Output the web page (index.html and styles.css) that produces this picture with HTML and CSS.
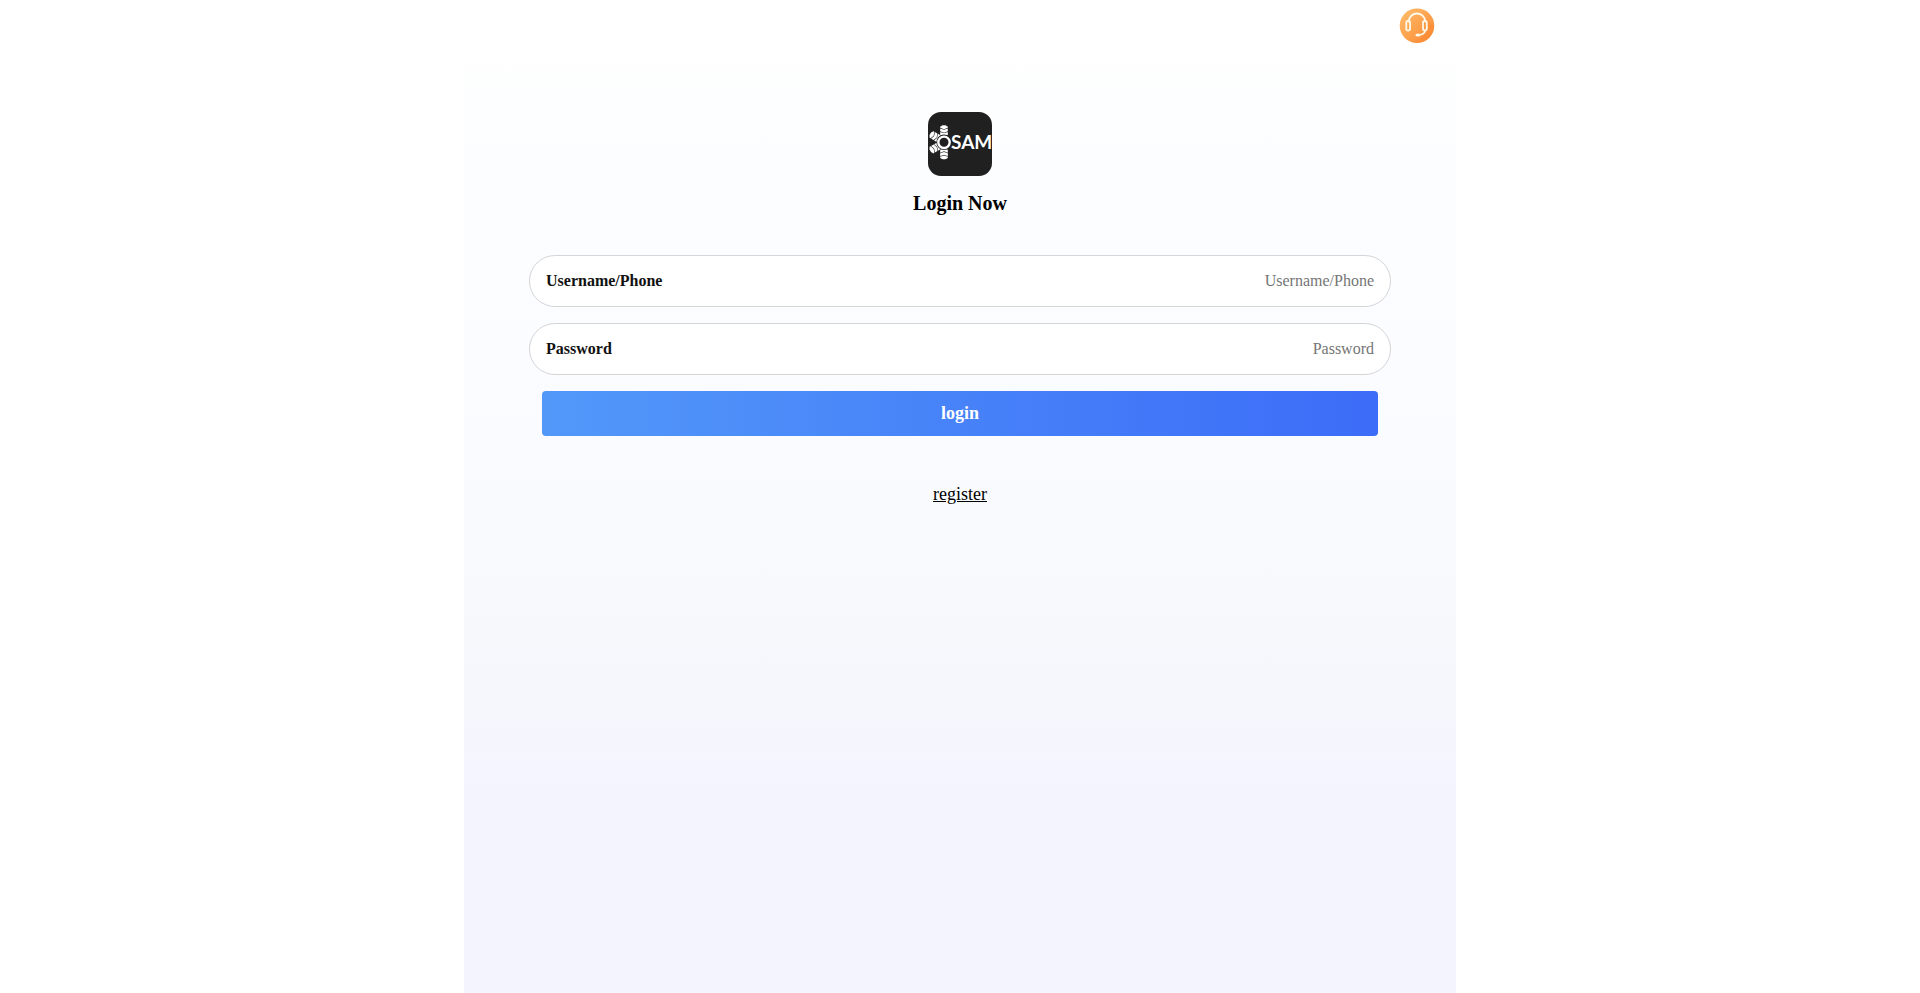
FILE: index.html
```html
<!DOCTYPE html>
<html lang="en">
<head>
<meta charset="utf-8">
<meta name="viewport" content="width=device-width, initial-scale=1">
<title>Login Now</title>
<link rel="stylesheet" href="styles.css">
</head>
<body>
<div class="page">
  <header class="topbar">
    <button class="support" type="button" aria-label="Customer service">
      <svg viewBox="0 0 36 36" width="36" height="36" aria-hidden="true">
        <defs>
          <linearGradient id="orange" x1="0" y1="0" x2="1" y2="1">
            <stop offset="0" stop-color="#ffbf6e"/>
            <stop offset="1" stop-color="#fb8730"/>
          </linearGradient>
        </defs>
        <circle cx="18" cy="17.700" r="17.300" fill="url(#orange)"/>
        <path d="M26 9A17.300 17.300 0 0 1 13 34 A17.300 17.300 0 0 0 35 19 Z" fill="#fb8126" opacity=".25"/>
        <g fill="none" stroke="#fff8e8" stroke-width="1.800" stroke-linecap="round">
          <path d="M9.800 13.500C10.500 2.800 25.500 2.800 26.200 13.500"/>
          <rect x="7.300" y="13" width="3.800" height="9.500" rx="1.500"/>
          <rect x="24" y="13" width="3.800" height="9.500" rx="1.500"/>
          <path d="M26 22.500C25.700 25 23.500 26.800 20 27"/>
        </g>
        <ellipse cx="18.800" cy="27" rx="2.500" ry="1.500" fill="#fff8e8"/>
      </svg>
    </button>
  </header>
  <main class="content">
    <svg class="logo" viewBox="0 0 64 64" width="64" height="64" role="img" aria-label="OSAM">
      <defs>
        <g id="spoke">
          <path d="M-3.800-7.400V-10.400L0-9 3.800-10.400V-7.400L0-5.500Z"/>
          <path d="M-3.800-11V-13.900L0-12.500 3.800-13.900V-11L0-9.600Z"/>
          <path d="M-3.800-14.500V-15.600L-1.500-17H1.500L3.800-15.600V-14.500L0-13.100Z"/>
        </g>
      </defs>
      <rect width="64" height="64" rx="13" fill="#202020"/>
      <g fill="#fff">
        <use href="#spoke" transform="translate(16 30.300)"/>
        <use href="#spoke" transform="translate(16 30.300) rotate(180)"/>
        <use href="#spoke" transform="translate(17 30.300) rotate(-60)"/>
        <use href="#spoke" transform="translate(17 30.300) rotate(-120)"/>
        <text class="logo-text" x="23" y="37">SAM</text>
      </g>
      <circle cx="16" cy="30.300" r="5.700" fill="#202020" stroke="#202020" stroke-width="4"/>
      <circle cx="16" cy="30.300" r="5.700" fill="none" stroke="#fff" stroke-width="2.400"/>
    </svg>
    <h1 class="title">Login Now</h1>
    <form class="form">
      <div class="field">
        <label class="label" for="username">Username/Phone</label>
        <input class="input" id="username" type="text" placeholder="Username/Phone">
      </div>
      <div class="field">
        <label class="label" for="password">Password</label>
        <input class="input" id="password" type="password" placeholder="Password">
      </div>
      <button class="submit" type="submit">login</button>
    </form>
    <a class="register" href="#register">register</a>
  </main>
</div>
</body>
</html>
```
FILE: styles.css
```css
* {
  box-sizing: border-box;
}

body {
  margin: 0;
  background: #fff;
  color: #000;
  font-family: "Liberation Serif", "Times New Roman", serif;
  font-size: 16px;
}

.page {
  max-width: 992px;
  min-height: 100vh;
  margin: 0 auto;
  background: linear-gradient(180deg, #fff 0, #fcfdff 20%, #fafbfe 46%, #f6f7fc 70%, #f3f4fe 80%, #f3f4fe 100%);
}

.topbar {
  display: flex;
  justify-content: flex-end;
  padding: 8px 21px;
}

.support {
  display: block;
  padding: 0;
  border: 0;
  background: none;
  cursor: pointer;
}

.support svg {
  display: block;
}

.content {
  display: flex;
  flex-direction: column;
  align-items: center;
  padding: 60px 65px;
}

.logo {
  display: block;
}

.logo-text {
  font-family: Lato, sans-serif;
  font-size: 19px;
  font-weight: 700;
}

.title {
  margin: 16px 0 40px;
  font-size: 20px;
  line-height: 23px;
}

.form {
  display: flex;
  flex-direction: column;
  gap: 16px;
  width: 100%;
}

.field {
  display: flex;
  align-items: center;
  height: 52px;
  padding: 0 16px;
  border: 1px solid #d5d5d8;
  border-radius: 26px;
  background: #fff;
}

.label {
  color: #111;
  font-weight: 700;
}

.input {
  flex: 1;
  min-width: 0;
  padding: 0;
  border: 0;
  outline: 0;
  background: transparent;
  font: inherit;
  text-align: right;
}

.input::placeholder {
  color: #757575;
}

.submit {
  height: 45px;
  margin: 0 13px;
  border: 0;
  border-radius: 4px;
  background: linear-gradient(90deg, #5298f9, #3c6cf8);
  color: #fff;
  font: inherit;
  font-size: 18px;
  font-weight: 700;
  cursor: pointer;
}

.register {
  margin-top: 48px;
  color: #000;
  font-size: 18px;
}
```
